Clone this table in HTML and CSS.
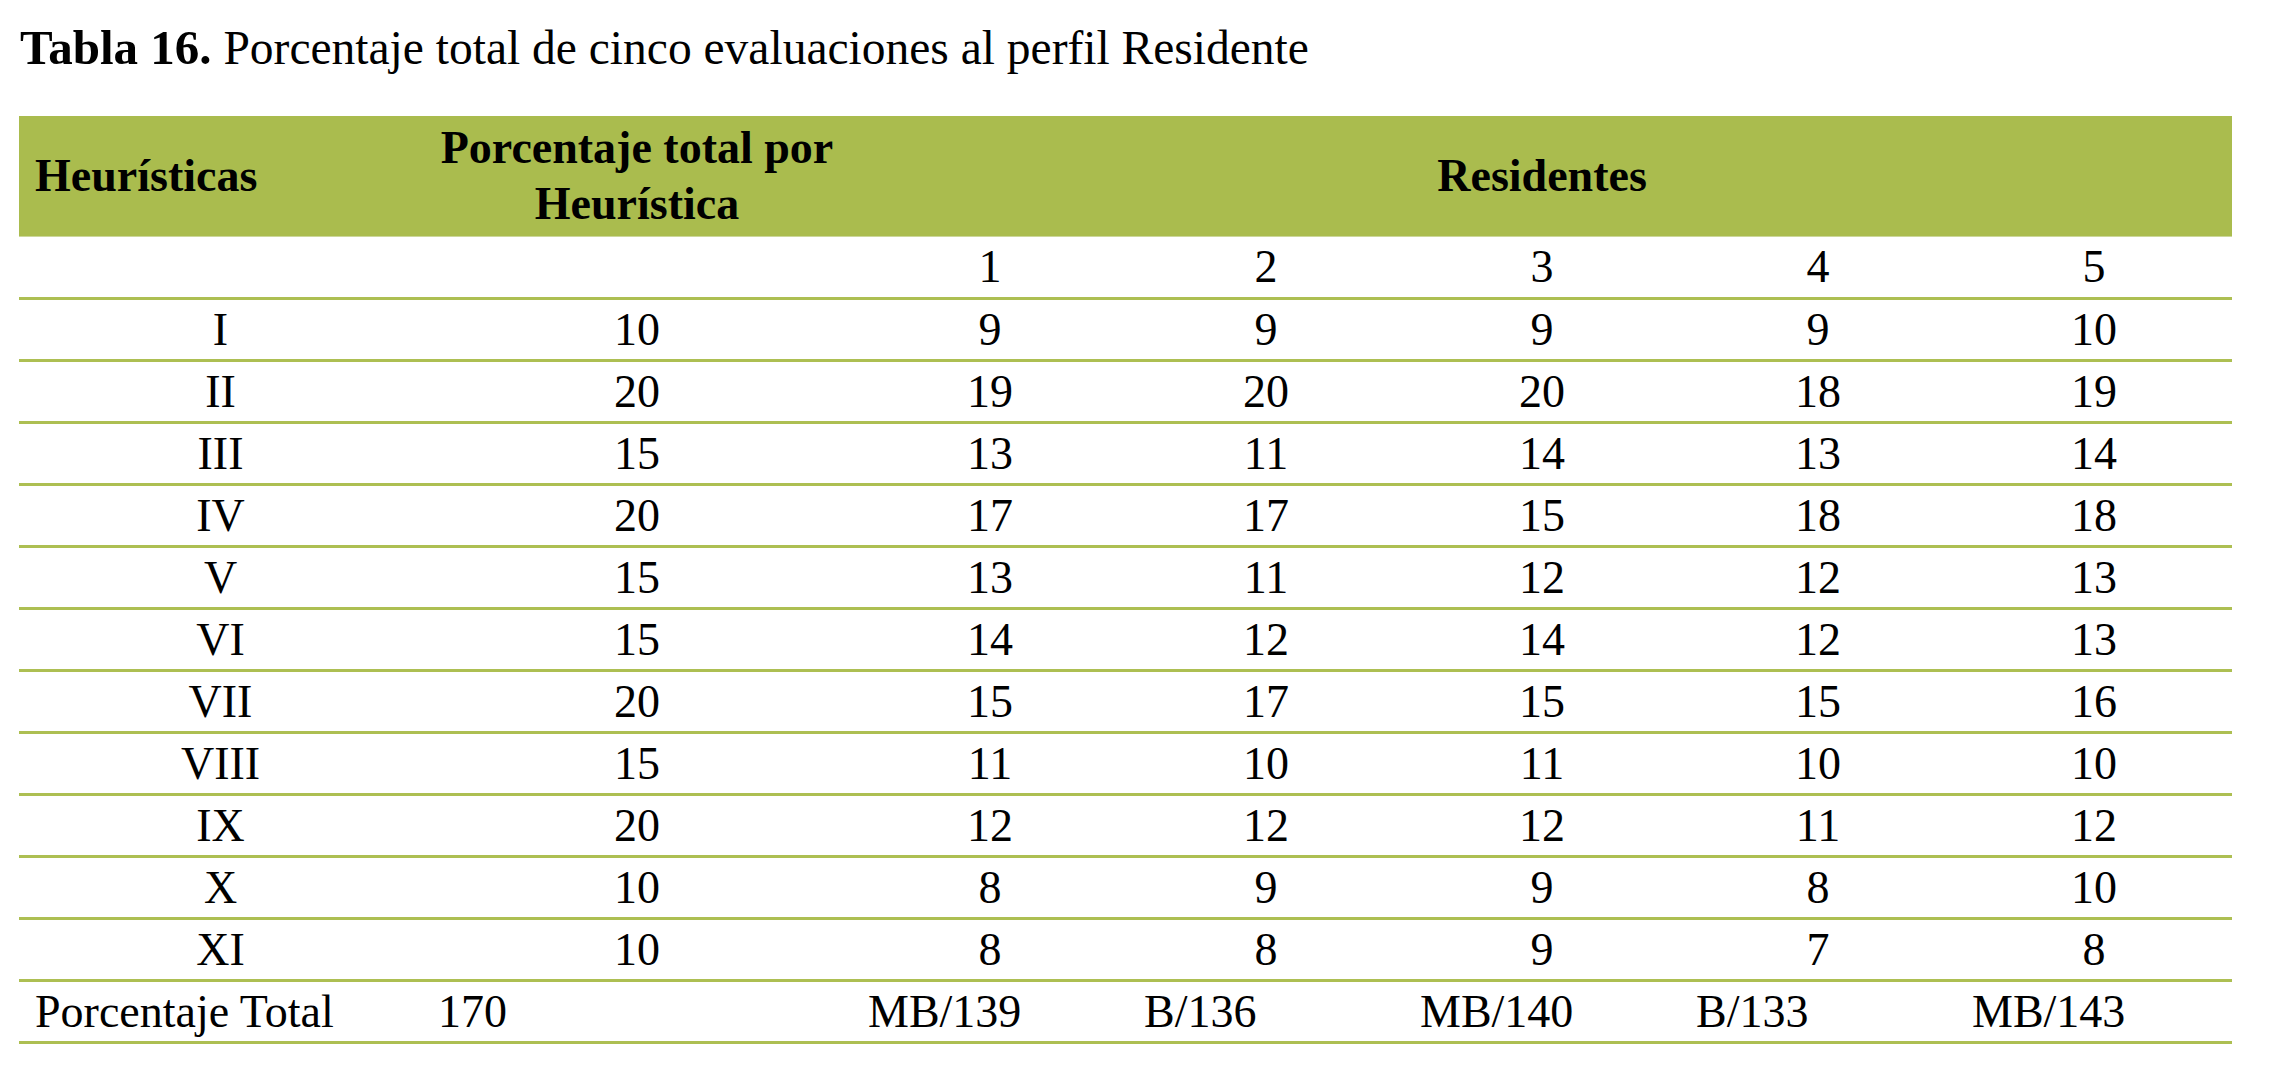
FILE: index.html
```html
<!DOCTYPE html>
<html lang="es">
<head>
<meta charset="utf-8">
<title>Tabla 16</title>
<link rel="stylesheet" href="styles.css">
</head>
<body>
<div class="page">
  <p class="caption"><b>Tabla 16.</b> Porcentaje total de cinco evaluaciones al perfil Residente</p>
  <table class="data">
    <colgroup>
      <col class="c-heur">
      <col class="c-pct">
      <col class="c-res"><col class="c-res"><col class="c-res"><col class="c-res"><col class="c-res">
    </colgroup>
    <thead>
      <tr>
        <th class="left">Heurísticas</th>
        <th>Porcentaje total por<br>Heurística</th>
        <th colspan="5">Residentes</th>
      </tr>
    </thead>
    <tbody>
      <tr class="first"><td></td><td></td><td>1</td><td>2</td><td>3</td><td>4</td><td>5</td></tr>
      <tr><td>I</td><td>10</td><td>9</td><td>9</td><td>9</td><td>9</td><td>10</td></tr>
      <tr><td>II</td><td>20</td><td>19</td><td>20</td><td>20</td><td>18</td><td>19</td></tr>
      <tr><td>III</td><td>15</td><td>13</td><td>11</td><td>14</td><td>13</td><td>14</td></tr>
      <tr><td>IV</td><td>20</td><td>17</td><td>17</td><td>15</td><td>18</td><td>18</td></tr>
      <tr><td>V</td><td>15</td><td>13</td><td>11</td><td>12</td><td>12</td><td>13</td></tr>
      <tr><td>VI</td><td>15</td><td>14</td><td>12</td><td>14</td><td>12</td><td>13</td></tr>
      <tr><td>VII</td><td>20</td><td>15</td><td>17</td><td>15</td><td>15</td><td>16</td></tr>
      <tr><td>VIII</td><td>15</td><td>11</td><td>10</td><td>11</td><td>10</td><td>10</td></tr>
      <tr><td>IX</td><td>20</td><td>12</td><td>12</td><td>12</td><td>11</td><td>12</td></tr>
      <tr><td>X</td><td>10</td><td>8</td><td>9</td><td>9</td><td>8</td><td>10</td></tr>
      <tr><td>XI</td><td>10</td><td>8</td><td>8</td><td>9</td><td>7</td><td>8</td></tr>
      <tr class="total"><td>Porcentaje Total</td><td>170</td><td>MB/139</td><td>B/136</td><td>MB/140</td><td>B/133</td><td>MB/143</td></tr>
    </tbody>
  </table>
</div>
</body>
</html>
```
FILE: styles.css
```css
html, body {
  margin: 0;
  padding: 0;
  background: #ffffff;
}
body {
  font-family: "Liberation Serif", "Times New Roman", serif;
  color: #000000;
}
.page {
  padding: 19px 38px 0 19px;
}
.caption {
  margin: 0 0 39px 1px;
  font-size: 47.5px;
  line-height: 58px;
  white-space: nowrap;
}
.caption b {
  font-weight: bold;
  font-size: 49px;
}
.data {
  width: 2213px;
  table-layout: fixed;
  border-collapse: separate;
  border-spacing: 0;
  font-size: 46px;
}
.c-heur { width: 403px; }
.c-pct { width: 430px; }
.c-res { width: 276px; }
.data th {
  background: #aabc4e;
  height: 120px;
  padding: 0 16px;
  font-weight: bold;
  line-height: 56px;
  text-align: center;
  vertical-align: middle;
  border-bottom: 1px solid #ccd79b;
}
.data th.left {
  text-align: left;
}
.data td {
  padding: 0;
  line-height: 59px;
  text-align: center;
  border-bottom: 3px solid #adbf52;
  white-space: nowrap;
}
.data tr.first td {
  line-height: 60px;
}
.data tr.total td {
  text-align: left;
  padding-left: 16px;
}
```
